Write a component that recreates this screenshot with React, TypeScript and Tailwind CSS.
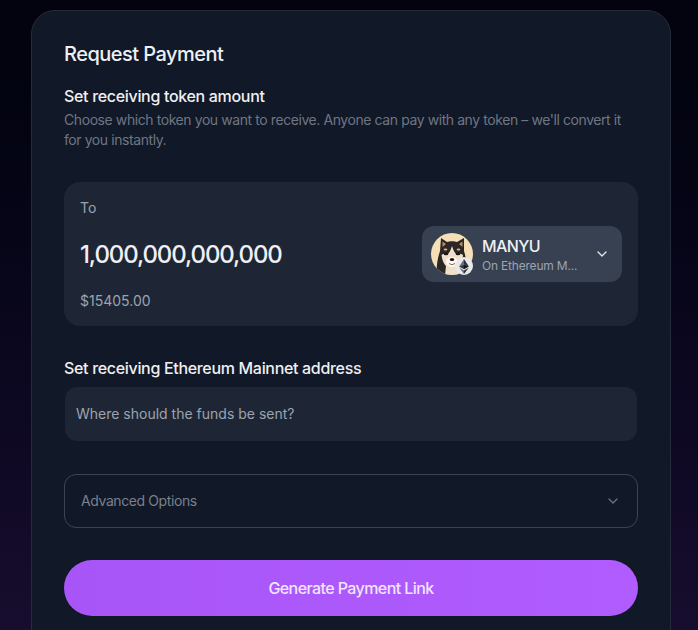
import React from "react";

function Avatar() {
  return (
    <div className="relative w-[42px] h-[42px] shrink-0">
      <svg width="42" height="42" viewBox="0 0 42 42" className="block">
        <defs>
          <clipPath id="c"><circle cx="21" cy="21" r="21" /></clipPath>
        </defs>
        <g clipPath="url(#c)">
          <rect width="42" height="42" fill="#f5dfb6" />
          <path d="M6 42 C5 32 7 24 9 18 L10 5 L16 9 C18.500 8 23.500 8 26 9 L33 5 L33 18 C35 24 36 32 35 42 Z" fill="#2b2724" />
          <path d="M11.500 8.500 L15 11 L11.500 14 Z M31.500 8.500 L28 11 L31.500 14 Z" fill="#b98d68" />
          <path d="M21 13 C20 16 19.500 18 17 21 C14 20.500 11.500 21 10.500 22 C11 27 13 31 15 33 L14 42 L29 42 L28 33 C30 31 32 27 32 22 C31 21 28 20.500 25 21 C22.500 18 22 16 21 13 Z" fill="#efe0cc" />
          <ellipse cx="14.500" cy="16.500" rx="1.900" ry="1.100" fill="#d9b28a" />
          <ellipse cx="27.500" cy="16.500" rx="1.900" ry="1.100" fill="#d9b28a" />
          <ellipse cx="21" cy="29" rx="6" ry="5" fill="#fff9f0" />
          <ellipse cx="15" cy="21" rx="2.300" ry="1.300" fill="#1a1614" />
          <ellipse cx="27" cy="21" rx="2.300" ry="1.300" fill="#1a1614" />
          <ellipse cx="21" cy="26.500" rx="2.300" ry="1.600" fill="#1a1614" />
          <path d="M18 30.500 Q21 33 24 30.500" fill="none" stroke="#8b6a50" strokeWidth="1" />
        </g>
      </svg>
      <div className="absolute right-0 bottom-0 w-[18px] h-[18px] rounded-full bg-[#e8e9ec] flex items-center justify-center">
        <svg width="10" height="15" viewBox="0 0 11 17">
          <path d="M5.500 0 L0 8.600 L5.500 6.200 Z" fill="#6b6f78" />
          <path d="M5.500 0 L11 8.600 L5.500 6.200 Z" fill="#2f3138" />
          <path d="M5.500 6.200 L0 8.600 L5.500 11.700 Z" fill="#33353c" />
          <path d="M5.500 6.200 L11 8.600 L5.500 11.700 Z" fill="#111318" />
          <path d="M0 9.700 L5.500 17 L5.500 12.900 Z" fill="#6b6f78" />
          <path d="M11 9.700 L5.500 17 L5.500 12.900 Z" fill="#2f3138" />
        </svg>
      </div>
    </div>
  );
}

function Chevron({ size, color }: { size: number; color: string }) {
  return (
    <svg width={size} height={size} viewBox="0 0 24 24" fill="none" stroke={color} strokeWidth="2" strokeLinecap="round" strokeLinejoin="round">
      <path d="m6 9 6 6 6-6" />
    </svg>
  );
}

export default function App() {
  return (
    <div className="h-[630px] overflow-hidden bg-gradient-to-b from-[#02030f] from-10% to-[#170d2e] pl-[31px] pt-[10px] font-['Inter',sans-serif]">
      <div className="w-[640px] h-[680px] rounded-3xl border border-[#252b38] bg-[#111827] px-8 pt-[29px]">
        <h2 className="text-xl leading-7 font-medium tracking-[-0.52px] text-[#eef0f3]">Request Payment</h2>
        <h3 className="mt-4 text-base leading-6 font-medium tracking-[-0.32px] text-[#eef0f3]">Set receiving token amount</h3>
        <p className="mt-[2px] text-sm leading-5 tracking-[-0.42px] text-[#6f7683]">
          Choose which token you want to receive. Anyone can pay with any token – we'll convert it for you instantly.
        </p>
        <div className="mt-8 h-[144px] rounded-2xl bg-[#1e2635] px-4 pt-4">
          <div className="text-sm leading-5 text-[#9ca3af]">To</div>
          <div className="mt-[8px] flex items-center justify-between">
            <span className="pt-[2px] text-2xl leading-8 font-medium tracking-[-1.1px] text-[#eef0f3]">1,000,000,000,000</span>
            <button className="w-[200px] h-14 rounded-xl bg-[#374151] pl-[9px] pr-3 flex items-center">
              <Avatar />
              <div className="ml-[9px] flex-1 text-left">
                <div className="text-base leading-6 font-medium tracking-[-0.6px] text-[#eef0f3]">MANYU</div>
                <div className="text-xs leading-4 tracking-[-0.2px] text-[#9ca3af]">On Ethereum M...</div>
              </div>
              <Chevron size={16} color="#e5e7eb" />
            </button>
          </div>
          <div className="mt-[9px] text-sm leading-5 text-[#9ca3af]">$15405.00</div>
        </div>
        <h3 className="mt-[30px] text-base leading-6 font-medium tracking-[-0.32px] text-[#eef0f3]">Set receiving Ethereum Mainnet address</h3>
        <div className="mx-px mt-[7px] h-[54px] rounded-xl bg-[#1e2635] px-[11px] flex items-center text-sm text-[#9ca3af]">
          Where should the funds be sent?
        </div>
        <div className="mt-[33px] h-[54px] rounded-xl border border-[#3d4451] pl-4 pr-4 flex items-center justify-between text-sm tracking-[-0.4px] text-[#7a808c]">
          <span>Advanced Options</span>
          <Chevron size={16} color="#6b7280" />
        </div>
        <button className="mt-8 w-full h-14 rounded-full bg-gradient-to-r from-[#a855f7] to-[#b05cff] text-base font-medium tracking-[-0.58px] text-[#efe6ff]">
          Generate Payment Link
        </button>
      </div>
    </div>
  );
}
